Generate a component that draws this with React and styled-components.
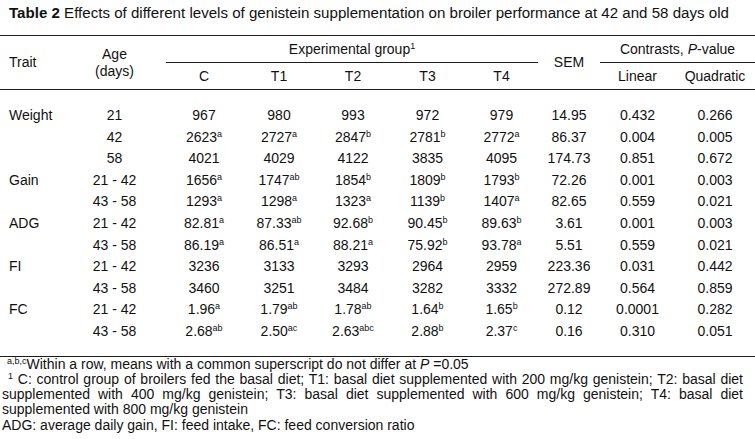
import React from 'react'
import styled, { createGlobalStyle } from 'styled-components'

const GlobalStyle = createGlobalStyle`
  html, body {
    margin: 0;
    padding: 0;
    background: #fff;
  }
  body {
    font-family: 'Liberation Sans', Arial, sans-serif;
    color: #111;
  }
`

const Page = styled.div`
  width: 755px;
  height: 439px;
  overflow: hidden;
  font-size: 14px;
`

const Title = styled.div`
  padding: 4px 0 0 9px;
  font-size: 15.1px;
  line-height: 17px;
  margin-bottom: 14px;
  white-space: nowrap;
  strong {
    font-weight: bold;
  }
`

const Table = styled.table`
  width: 755px;
  table-layout: fixed;
  border-collapse: separate;
  border-spacing: 0;
  font-size: 14px;
`

const Col = styled.col`
  width: ${p => p.$w}px;
`

const Head = styled.th`
  font-weight: normal;
  padding: 0;
  height: 26px;
  line-height: 17px;
  text-align: ${p => (p.$left ? 'left' : 'center')};
  padding-left: ${p => (p.$left ? '9px' : '0')};
  vertical-align: middle;
  border-top: ${p => (p.$top ? '1px solid #1c1c1c' : 'none')};
  border-bottom: ${p => (p.$bottom ? '1px solid #1c1c1c' : 'none')};
  white-space: nowrap;
`

const Cell = styled.td`
  padding: 0;
  padding-top: ${p => (p.$first ? '15px' : '0')};
  padding-bottom: ${p => (p.$last ? '13px' : '0')};
  padding-left: ${p => (p.$left ? '9px' : '0')};
  line-height: 21.6px;
  text-align: ${p => (p.$left ? 'left' : 'center')};
  border-bottom: ${p => (p.$last ? '1px solid #1c1c1c' : 'none')};
  white-space: nowrap;
`

const Sup = styled.sup`
  font-size: 9px;
  line-height: 0;
  vertical-align: 5px;
`

const Notes = styled.div`
  width: 741px;
  padding-left: 2px;
  font-size: 14px;
  line-height: 15.3px;
`

const Line = styled.div`
  white-space: nowrap;
  padding-left: ${p => p.$indent || 0}px;
  text-align: ${p => (p.$justify ? 'justify' : 'left')};
  text-align-last: ${p => (p.$justify ? 'justify' : 'auto')};
`

const widths = [63, 103, 76, 74, 74, 75, 73, 62, 75, 80]

const rows = [
  ['Weight', '21', ['967'], ['980'], ['993'], ['972'], ['979'], '14.95', '0.432', '0.266'],
  ['', '42', ['2623', 'a'], ['2727', 'a'], ['2847', 'b'], ['2781', 'b'], ['2772', 'a'], '86.37', '0.004', '0.005'],
  ['', '58', ['4021'], ['4029'], ['4122'], ['3835'], ['4095'], '174.73', '0.851', '0.672'],
  ['Gain', '21 - 42', ['1656', 'a'], ['1747', 'ab'], ['1854', 'b'], ['1809', 'b'], ['1793', 'b'], '72.26', '0.001', '0.003'],
  ['', '43 - 58', ['1293', 'a'], ['1298', 'a'], ['1323', 'a'], ['1139', 'b'], ['1407', 'a'], '82.65', '0.559', '0.021'],
  ['ADG', '21 - 42', ['82.81', 'a'], ['87.33', 'ab'], ['92.68', 'b'], ['90.45', 'b'], ['89.63', 'b'], '3.61', '0.001', '0.003'],
  ['', '43 - 58', ['86.19', 'a'], ['86.51', 'a'], ['88.21', 'a'], ['75.92', 'b'], ['93.78', 'a'], '5.51', '0.559', '0.021'],
  ['FI', '21 - 42', ['3236'], ['3133'], ['3293'], ['2964'], ['2959'], '223.36', '0.031', '0.442'],
  ['', '43 - 58', ['3460'], ['3251'], ['3484'], ['3282'], ['3332'], '272.89', '0.564', '0.859'],
  ['FC', '21 - 42', ['1.96', 'a'], ['1.79', 'ab'], ['1.78', 'ab'], ['1.64', 'b'], ['1.65', 'b'], '0.12', '0.0001', '0.282'],
  ['', '43 - 58', ['2.68', 'ab'], ['2.50', 'ac'], ['2.63', 'abc'], ['2.88', 'b'], ['2.37', 'c'], '0.16', '0.310', '0.051'],
]

export default function App() {
  return (
    <Page>
      <GlobalStyle />
      <Title>
        <strong>Table 2</strong> Effects of different levels of genistein supplementation on broiler performance at 42 and 58 days old
      </Title>
      <Table>
        <colgroup>
          {widths.map((w, i) => <Col key={i} $w={w} />)}
        </colgroup>
        <thead>
          <tr>
            <Head rowSpan={2} $left $top $bottom>Trait</Head>
            <Head rowSpan={2} $top $bottom>Age<br />(days)</Head>
            <Head colSpan={5} $top $bottom>Experimental group<Sup>1</Sup></Head>
            <Head rowSpan={2} $top $bottom>SEM</Head>
            <Head colSpan={2} $top $bottom>Contrasts, <i>P</i>-value</Head>
          </tr>
          <tr>
            {['C', 'T1', 'T2', 'T3', 'T4'].map(t => <Head key={t} $bottom>{t}</Head>)}
            <Head $bottom>Linear</Head>
            <Head $bottom>Quadratic</Head>
          </tr>
        </thead>
        <tbody>
          {rows.map((r, i) => {
            const first = i === 0
            const last = i === rows.length - 1
            return (
              <tr key={i}>
                <Cell $left $first={first} $last={last}>{r[0]}</Cell>
                <Cell $first={first} $last={last}>{r[1]}</Cell>
                {r.slice(2, 7).map((v, j) => (
                  <Cell key={j} $first={first} $last={last}>
                    {v[0]}{v[1] && <Sup>{v[1]}</Sup>}
                  </Cell>
                ))}
                <Cell $first={first} $last={last}>{r[7]}</Cell>
                <Cell $first={first} $last={last}>{r[8]}</Cell>
                <Cell $first={first} $last={last}>{r[9]}</Cell>
              </tr>
            )
          })}
        </tbody>
      </Table>
      <Notes>
        <Line $indent={5}><Sup>a,b,c</Sup>Within a row, means with a common superscript do not differ at <i>P</i> =0.05</Line>
        <Line $justify $indent={6}><Sup>1</Sup> C: control group of broilers fed the basal diet; T1: basal diet supplemented with 200 mg/kg genistein; T2: basal diet</Line>
        <Line $justify>supplemented with 400 mg/kg genistein; T3: basal diet supplemented with 600 mg/kg genistein; T4: basal diet</Line>
        <Line>supplemented with 800 mg/kg genistein</Line>
        <Line>ADG: average daily gain, FI: feed intake, FC: feed conversion ratio</Line>
      </Notes>
    </Page>
  )
}
